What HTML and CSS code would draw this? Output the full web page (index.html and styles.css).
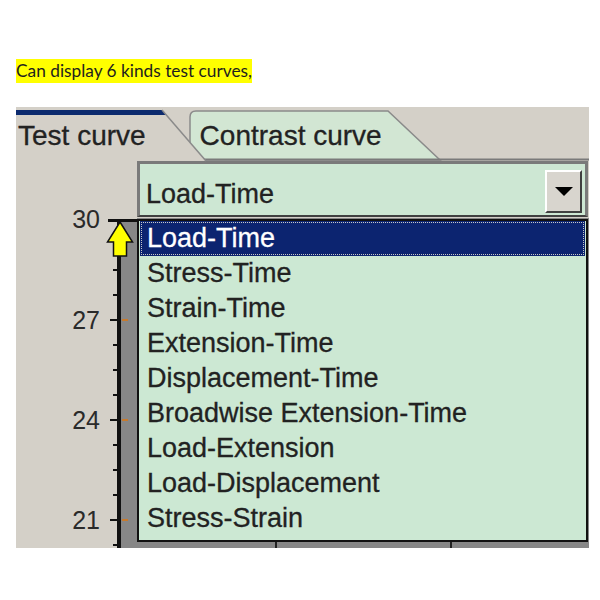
FILE: index.html
```html
<!DOCTYPE html>
<html>
<head>
<meta charset="utf-8">
<link rel="stylesheet" href="styles.css">
</head>
<body>
<p class="caption"><span class="hl">Can display 6 kinds test curves,</span></p>
<div class="panel">
  <div class="tabs">
    <svg class="tabs-bg" width="573" height="56" viewBox="0 0 573 56">
      <path d="M174 53 V10 Q174 4 180 4 H372 L424 53 Z" fill="#d2e6d3" stroke="#8a8a8a" stroke-width="1.5"/>
      <line x1="186" y1="52.5" x2="573" y2="52.5" stroke="#7a7a7a" stroke-width="2"/>
      <path d="M0 2 H146 L190 54 H0 Z" fill="#d4d0c8"/>
      <path d="M0 3 H146 L150.5 8 H0 Z" fill="#0c2a6e"/>
      <line x1="146" y1="3" x2="190" y2="54" stroke="#8a8a8a" stroke-width="1.5"/>
    </svg>
    <div class="tab tab-test">Test curve</div>
    <div class="tab tab-contrast">Contrast curve</div>
  </div>
  <div class="content">
    <div class="combo">
      <span class="combo-text">Load-Time</span>
      <span class="combo-btn"><svg width="18" height="9" viewBox="0 0 18 9"><path d="M0 0 H18 L9 9 Z" fill="#000"/></svg></span>
    </div>
    <div class="chart">
      <svg class="axis" width="121" height="330" viewBox="0 0 121 330">
        <rect x="105" y="4" width="16" height="326" fill="#878787"/>
        <rect x="92" y="1" width="29" height="3" fill="#111"/>
        <rect x="101" y="1" width="4" height="329" fill="#111"/>
        <g fill="#111">
          <rect x="94" y="1" width="7" height="2"/>
          <rect x="97" y="26" width="4" height="2"/>
          <rect x="97" y="51" width="4" height="2"/>
          <rect x="97" y="76" width="4" height="2"/>
          <rect x="94" y="101" width="7" height="2"/>
          <rect x="97" y="126" width="4" height="2"/>
          <rect x="97" y="151" width="4" height="2"/>
          <rect x="97" y="176" width="4" height="2"/>
          <rect x="94" y="201" width="7" height="2"/>
          <rect x="97" y="226" width="4" height="2"/>
          <rect x="97" y="251" width="4" height="2"/>
          <rect x="97" y="276" width="4" height="2"/>
          <rect x="94" y="301" width="7" height="2"/>
          <rect x="97" y="326" width="4" height="2"/>
        </g>
        <g fill="#c87a2c">
          <rect x="106" y="101" width="6" height="2"/>
          <rect x="106" y="201" width="6" height="2"/>
          <rect x="106" y="301" width="6" height="2"/>
        </g>
        <g class="ylabels">
          <text x="84" y="10">30</text>
          <text x="84" y="111">27</text>
          <text x="84" y="211">24</text>
          <text x="84" y="311">21</text>
        </g>
        <path d="M104 4 L116.5 24 H110.5 V38 H97.5 V24 H91.5 Z" fill="#ffff00" stroke="#111" stroke-width="1.5" stroke-linejoin="miter"/>
      </svg>
      <div class="plot"></div>
      <ul class="dropdown">
        <li class="item sel">Load-Time</li>
        <li class="item">Stress-Time</li>
        <li class="item">Strain-Time</li>
        <li class="item">Extension-Time</li>
        <li class="item">Displacement-Time</li>
        <li class="item">Broadwise Extension-Time</li>
        <li class="item">Load-Extension</li>
        <li class="item">Load-Displacement</li>
        <li class="item">Stress-Strain</li>
      </ul>
    </div>
  </div>
</div>
</body>
</html>
```

FILE: styles.css
```css
body {
  margin: 0;
  background: #ffffff;
  font-family: "Liberation Sans", Arial, sans-serif;
}

.caption {
  margin: 0;
  padding: 59px 0 0 16px;
  height: 24px;
  font-family: Lato, "Liberation Sans", sans-serif;
  font-size: 17.3px;
  line-height: 24px;
}

.hl {
  display: inline-block;
  vertical-align: top;
  background: #ffff00;
  color: #1e1e1e;
}

.panel {
  margin: 24px 0 0 16px;
  width: 573px;
  height: 441px;
  background: #d4d0c8;
  display: flex;
  flex-direction: column;
}

.tabs {
  position: relative;
  height: 53px;
  box-sizing: border-box;
  padding-top: 13px;
  display: flex;
  font-size: 28px;
  line-height: 31px;
  color: #222222;
  -webkit-text-stroke: 0.3px #222222;
}

.tabs-bg {
  position: absolute;
  left: 0;
  top: 0;
}

.tab {
  position: relative;
  white-space: nowrap;
}

.tab-test {
  margin-left: 2px;
}

.tab-contrast {
  margin-left: 54px;
}

.content {
  flex: 1;
  display: flex;
  flex-direction: column;
}

.combo {
  margin: 1px 0 0 121px;
  width: 451px;
  height: 56px;
  box-sizing: border-box;
  border: 3px solid #7a7a7a;
  border-bottom: 2px solid #404040;
  background: #cde7d3;
  display: flex;
  justify-content: space-between;
  align-items: flex-start;
  font-size: 27px;
  color: #222222;
  -webkit-text-stroke: 0.3px #222222;
}

.combo-text {
  padding: 9px 0 0 6px;
  line-height: 42px;
}

.combo-btn {
  margin: 6px 3px 0 0;
  width: 37px;
  height: 43px;
  box-sizing: border-box;
  background: #d8d5ce;
  border: 2px solid;
  border-color: #ffffff #404040 #404040 #ffffff;
  display: flex;
  align-items: center;
  justify-content: center;
}

.chart {
  position: relative;
  margin-top: 1px;
  height: 330px;
  display: flex;
}

.axis {
  flex: none;
  overflow: visible;
}

.ylabels text {
  font-family: "Liberation Sans", Arial, sans-serif;
  font-size: 25px;
  fill: #2a2a2a;
  text-anchor: end;
}

.plot {
  flex: 1;
  background:
    linear-gradient(#222, #222) no-repeat 138px 100% / 2px 6px,
    linear-gradient(#222, #222) no-repeat 313px 100% / 2px 6px,
    #878787;
}

.dropdown {
  position: absolute;
  left: 121px;
  top: 1px;
  width: 451px;
  height: 323px;
  box-sizing: border-box;
  margin: 0;
  padding: 0 1px;
  list-style: none;
  border: 2px solid #111111;
  background: #cce8d3;
  font-size: 27px;
  line-height: 35px;
  color: #222222;
  -webkit-text-stroke: 0.3px #222222;
}

.item {
  padding-left: 7px;
  white-space: nowrap;
}

.sel {
  background: #0c2470;
  color: #ffffff;
  -webkit-text-stroke: 0.3px #ffffff;
  outline: 1px dotted #c8c8c8;
  outline-offset: -2px;
}
```
